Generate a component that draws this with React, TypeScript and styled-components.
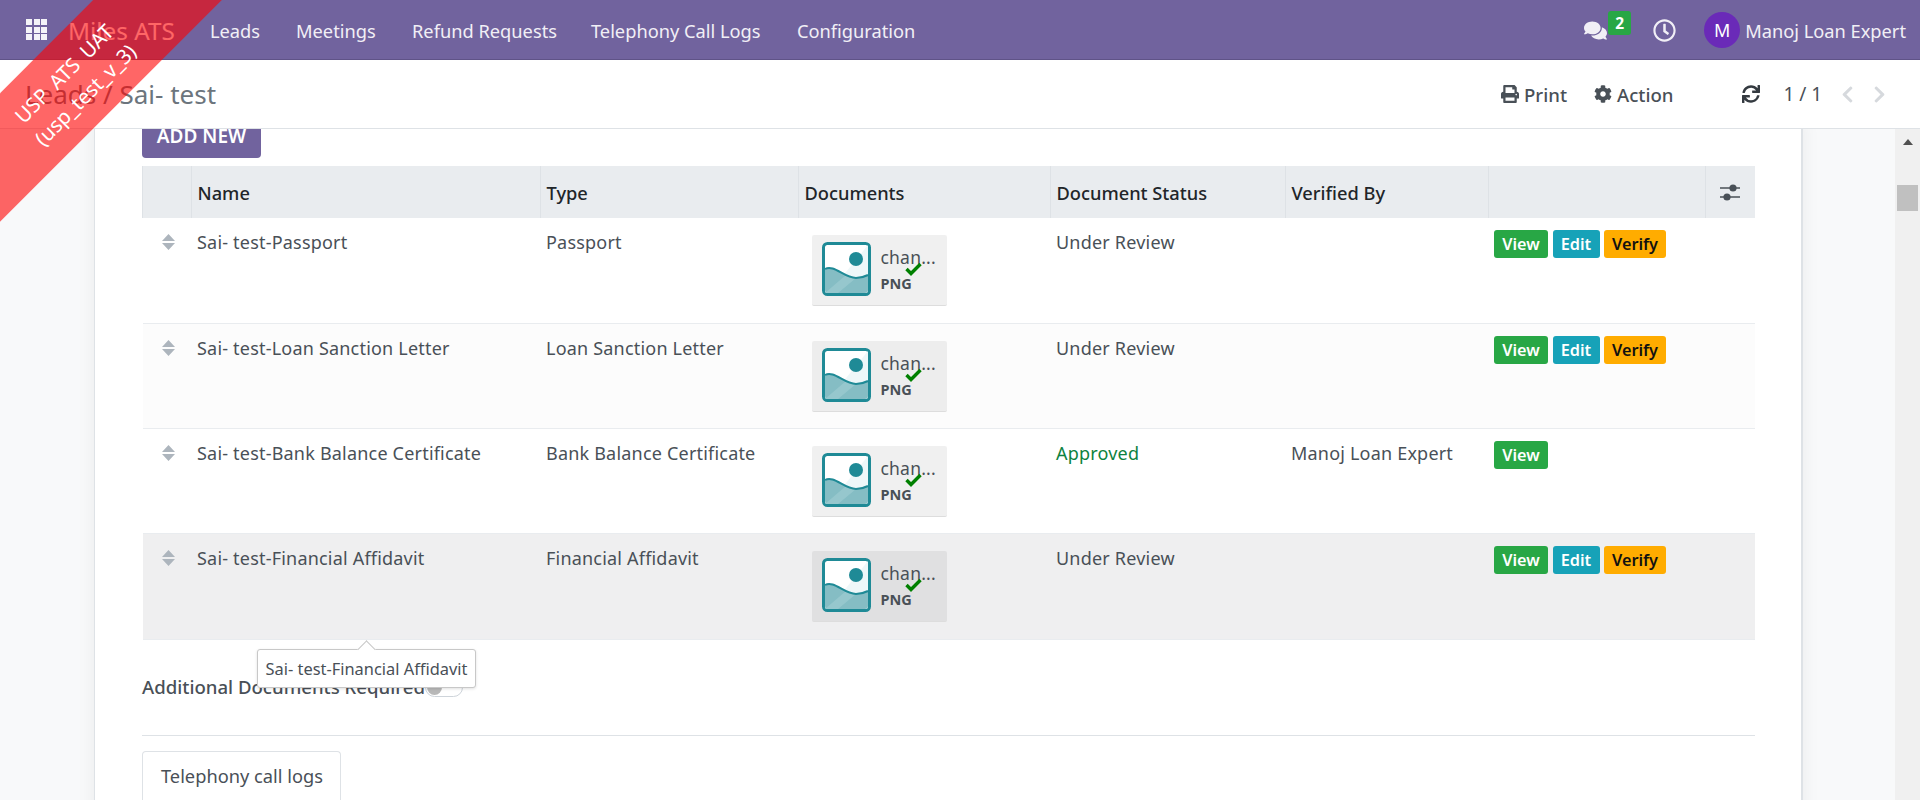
import React from 'react';
import styled, { createGlobalStyle } from 'styled-components';
import { FaCog, FaPrint, FaSync, FaComments, FaRegClock, FaChevronLeft, FaChevronRight } from 'react-icons/fa';

const Global = createGlobalStyle`
  html, body { margin: 0; padding: 0; height: 100%; overflow: hidden; }
  body { font-family: "Noto Sans", "Open Sans", sans-serif; font-size: 18px; color: #495057; background: #fff; }
  #root { height: 100%; }
`;

const Page = styled.div`
  height: 800px; display: flex; flex-direction: column; overflow: hidden; position: relative;
`;
const Navbar = styled.header`
  height: 58px; padding-top: 1px; flex: none; background: #71639e; border-bottom: 1px solid #5f5387;
  display: flex; align-items: center; color: #f1eff6; font-size: 18.25px;
`;
const AppsButton = styled.span`
  width: 21px; height: 21px; margin-left: 26px; margin-top: -1px; display: grid; grid-template-columns: repeat(3, 6px); grid-auto-rows: 6px; gap: 1.5px;
  & > i { background: #f4f3f8; display: block; }
`;
const Brand = styled.span`
  margin-left: 21px; font-size: 24.3px; color: #fff; width: 142px; flex: none; white-space: nowrap;
`;
const NavItem = styled.span<{ $w: number }>`
  width: ${p => p.$w}px; flex: none; white-space: nowrap;
`;
const NavRight = styled.div`
  margin-left: auto; display: flex; align-items: center; padding-right: 14px;
`;
const ChatWrap = styled.span`
  position: relative; width: 47px; height: 26px; display: flex; align-items: center; color: #f1eff6; font-size: 23px; margin-right: 22px;
`;
const Badge = styled.span`
  position: absolute; left: 24px; top: -6px; width: 23px; height: 24px; border-radius: 3px; background: #28a745; color: #fff;
  font-size: 15.5px; font-weight: 700; display: flex; align-items: center; justify-content: center;
`;
const ClockIcon = styled.span`
  color: #f1eff6; font-size: 23px; display: flex; margin-right: 28px;
`;
const Avatar = styled.span`
  width: 36px; height: 36px; border-radius: 50%; background: #6a2ab8; color: #fff; display: flex; align-items: center; justify-content: center;
  font-size: 18px; margin-right: 5px;
`;
const ControlPanel = styled.div`
  height: 69px; flex: none; background: #fff; border-bottom: 1px solid #dee2e6; box-sizing: border-box;
  display: flex; align-items: center; padding-left: 25px; padding-right: 31.5px;
`;
const Breadcrumb = styled.div`
  font-size: 26px; color: #6c757d; flex: 1;
`;
const ActionBtn = styled.span<{ $gap?: number }>`
  display: flex; align-items: center; gap: 5px; font-size: 18.6px; color: #495057; font-weight: 500; margin-right: ${p => p.$gap || 0}px;
  & svg { font-size: 18px; }
`;
const Refresh = styled.span`
  display: flex; font-size: 18px; color: #343a40; margin-left: 68px;
`;
const Pager = styled.span`
  font-size: 19px; color: #495057; margin-left: 24px; width: 41px; white-space: nowrap;
`;
const Chevron = styled.span`
  display: flex; font-size: 19px; color: #d6d9dd; margin-left: 13px;
`;
const Body = styled.div`
  flex: 1; display: flex; min-height: 0; background: #f8f9fa;
`;
const Scroller = styled.main`
  flex: 1; overflow: hidden; display: flex; padding-left: 94px; padding-right: 93px;
`;
const Sheet = styled.section`
  flex: 1; background: #fff; border: solid #dee2e6; border-width: 0 2px 0 1px; box-shadow: 0 0 18px rgba(0,0,0,.06);
  padding: 0 46px 0 47px; margin-top: -10px; min-height: 900px; box-sizing: border-box;
`;
const AddNew = styled.button`
  display: block; width: 119px; height: 39px; background: #71639e; color: #fff; border: 0; border-radius: 0 0 4px 4px; font: 600 19px "Noto Sans", sans-serif;
  padding: 0 0 5px; margin-bottom: 8px;
`;
const Table = styled.table`
  width: 100%; border-collapse: collapse; table-layout: fixed;
`;
const Th = styled.th`
  height: 52px; background: #e9ecef; color: #212529; font-weight: 500; text-align: left; padding: 0 5.5px; font-size: 18.25px;
  border-left: 1px solid #dee2e6; box-sizing: border-box;
`;
const Row = styled.tr<{ $bg?: string }>`
  background: ${p => p.$bg || '#fff'};
`;
const Td = styled.td<{ $ok?: boolean }>`
  height: 105.25px; box-sizing: border-box; vertical-align: top; padding: 12px 5.5px 0; border-bottom: 1px solid #e9ecef;
  font-size: 18px; letter-spacing: .2px; line-height: 24px; white-space: nowrap; color: ${p => (p.$ok ? '#0d8240' : '#495057')};
`;
const HandleCell = styled(Td)`
  padding: 16px 0 0 19px;
  & svg { display: block; }
`;
const DocCell = styled(Td)`
  padding: 17px 0 0 13px;
`;
const Card = styled.div`
  position: relative; width: 135px; height: 71px; background: rgba(0,0,0,.058); border-bottom: 1px solid #ddd; border-radius: 2px; box-sizing: border-box;
  display: flex; padding: 7px 0 0 10px; gap: 10px;
`;
const CardText = styled.div`
  display: flex; flex-direction: column; padding-top: 3px;
`;
const CardName = styled.span`
  font-size: 17.5px; line-height: 24px;
`;
const CardExt = styled.span`
  font-size: 14.5px; font-weight: 700; line-height: 18px; margin-top: 5px; letter-spacing: 0;
`;
const Tick = styled.svg`
  position: absolute; left: 93px; top: 27px; width: 17px; height: 14px;
`;
const Buttons = styled.div`
  display: flex; gap: 4.5px;
`;
const Btn = styled.span<{ $bg: string; $fg: string; $w: number }>`
  width: ${p => p.$w}px; height: 28px; border-radius: 3px; background: ${p => p.$bg}; color: ${p => p.$fg}; font-size: 16.25px; font-weight: 600; letter-spacing: 0;
  display: flex; align-items: center; justify-content: center; line-height: 1;
`;
const ToggleRow = styled.div`
  display: flex; align-items: center; margin-top: 35px; height: 24px; font-weight: 500; font-size: 18.6px; color: #495057;
`;
const Toggle = styled.span`
  width: 38px; height: 19px; border: 1px solid #ced4da; border-radius: 10px; box-sizing: border-box; margin-top: 2px; display: flex; align-items: center; padding-left: 1px;
  & > i { width: 15px; height: 15px; border-radius: 50%; background: #b8b8b8; display: block; }
`;
const Separator = styled.hr`
  border: 0; border-top: 1px solid #dee2e6; margin: 36px 0 15px;
`;
const Tab = styled.div`
  width: 199px; height: 50px; border: 1px solid #dee2e6; border-bottom: 0; border-radius: 4px 4px 0 0; box-sizing: border-box;
  padding: 12px 0 0 18px; font-size: 18.25px; line-height: 24px;
`;
const Tooltip = styled.div`
  position: absolute; left: 257px; top: 649px; width: 219px; height: 39px; background: #fff; border: 1px solid #c8c8c8; border-radius: 3px;
  box-sizing: border-box; box-shadow: 0 1px 3px rgba(0,0,0,.12); font-size: 16.4px; color: #495057; display: flex; align-items: center; justify-content: center; white-space: nowrap;
  &::before {
    content: ''; position: absolute; left: 102px; top: -7px; width: 12px; height: 12px; background: #fff;
    border: solid #c8c8c8; border-width: 1px 0 0 1px; transform: rotate(45deg);
  }
`;
const ScrollTrack = styled.aside`
  width: 25px; flex: none; background: #f0f0f0; display: flex; flex-direction: column; align-items: center; padding-top: 10px; box-sizing: border-box;
`;
const ScrollUp = styled.span`
  width: 0; height: 0; border: solid transparent; border-width: 0 5.5px 6px; border-bottom-color: #505050;
`;
const ScrollThumb = styled.span`
  width: 21px; height: 26px; background: #c0c0c0; margin-top: 40px;
`;
const Ribbon = styled.div`
  position: absolute; left: -126px; top: 38px; width: 400px; height: 91px; background: rgba(255,0,0,.6); transform: rotate(-45deg);
  color: #fff; font-size: 20.5px; line-height: 30px; text-align: center; display: flex; flex-direction: column; justify-content: center;
  pointer-events: none; white-space: nowrap; word-spacing: 4px;
`;
const SlidersIcon = styled.svg`
  display: block; margin-left: 8.5px;
`;

const cols = [49, 349, 258, 252, 235, 203, 217, 49];
const btn = {
  view: { $bg: '#28a745', $fg: '#fff', $w: 54, label: 'View' },
  edit: { $bg: '#17a2b8', $fg: '#fff', $w: 47, label: 'Edit' },
  verify: { $bg: '#ffac00', $fg: '#111', $w: 62, label: 'Verify' },
};

const rows = [
  { name: 'Passport', status: 'Under Review', by: '', acts: ['view', 'edit', 'verify'], bg: '#fff' },
  { name: 'Loan Sanction Letter', status: 'Under Review', by: '', acts: ['view', 'edit', 'verify'], bg: '#fcfcfc' },
  { name: 'Bank Balance Certificate', status: 'Approved', by: 'Manoj Loan Expert', acts: ['view'], bg: '#fff' },
  { name: 'Financial Affidavit', status: 'Under Review', by: '', acts: ['view', 'edit', 'verify'], bg: '#efeff0' },
] as const;

const ImageIcon = () => (
  <svg width="49" height="54" viewBox="0 0 49 54">
    <rect x="1.5" y="1.5" width="46" height="51" rx="4" fill="#fff" stroke="#1f8a96" strokeWidth="3" />
    <path d="M46 3 V33 C44 34 40 36 34 36 C30 36 26 34.500 22 32.500 Z" fill="#eef7f9" />
    <path d="M3 27 C12 22 22 36 34 36 C40 36 44 34 46 33 V48 a3 3 0 0 1-3 3 H6 a3 3 0 0 1-3-3 Z" fill="#85bdc4" stroke="none" />
    <path d="M3 51 L24 33 C28 35 31 36 34 36 L16 51 Z" fill="#96c7cd" />
    <path d="M3 27 C12 22 22 36 34 36 C40 36 44 34 46 33" fill="none" stroke="#1f8a96" strokeWidth="2" />
    <circle cx="34" cy="17" r="7" fill="#1f8a96" />
  </svg>
);

const SortHandle = () => (
  <svg width="13" height="16" viewBox="0 0 13 16">
    <path d="M6.5 0 L13 7 H0 Z M0 9 H13 L6.500 16 Z" fill="#adb5bd" />
  </svg>
);

const Sliders = () => (
  <SlidersIcon width="20" height="17" viewBox="0 0 20 17">
    <path d="M0 4h20M0 13h20" stroke="#495057" strokeWidth="1.7" />
    <circle cx="13" cy="4" r="3.6" fill="#495057" />
    <circle cx="7" cy="13" r="3.6" fill="#495057" />
  </SlidersIcon>
);

export default function App() {
  return (
    <Page>
      <Global />
      <Navbar>
        <AppsButton>{Array.from({ length: 9 }).map((_, i) => <i key={i} />)}</AppsButton>
        <Brand>Miles ATS</Brand>
        <NavItem $w={86}>Leads</NavItem>
        <NavItem $w={116}>Meetings</NavItem>
        <NavItem $w={179}>Refund Requests</NavItem>
        <NavItem $w={206}>Telephony Call Logs</NavItem>
        <NavItem $w={130}>Configuration</NavItem>
        <NavRight>
          <ChatWrap><FaComments /><Badge>2</Badge></ChatWrap>
          <ClockIcon><FaRegClock /></ClockIcon>
          <Avatar>M</Avatar>
          <span>Manoj Loan Expert</span>
        </NavRight>
      </Navbar>
      <ControlPanel>
        <Breadcrumb>Leads / Sai- test</Breadcrumb>
        <ActionBtn $gap={27}><FaPrint />Print</ActionBtn>
        <ActionBtn><FaCog />Action</ActionBtn>
        <Refresh><FaSync /></Refresh>
        <Pager>1 / 1</Pager>
        <Chevron><FaChevronLeft /></Chevron>
        <Chevron><FaChevronRight /></Chevron>
      </ControlPanel>
      <Body>
        <Scroller>
          <Sheet>
            <AddNew>ADD NEW</AddNew>
            <Table>
              <colgroup>{cols.map((w, i) => <col key={i} width={w} />)}</colgroup>
              <thead>
                <tr>
                  <Th />
                  <Th>Name</Th>
                  <Th>Type</Th>
                  <Th>Documents</Th>
                  <Th>Document Status</Th>
                  <Th>Verified By</Th>
                  <Th />
                  <Th><Sliders /></Th>
                </tr>
              </thead>
              <tbody>
                {rows.map(r => (
                  <Row key={r.name} $bg={r.bg}>
                    <HandleCell><SortHandle /></HandleCell>
                    <Td>Sai- test-{r.name}</Td>
                    <Td>{r.name}</Td>
                    <DocCell>
                      <Card>
                        <ImageIcon />
                        <CardText>
                          <CardName>chan...</CardName>
                          <CardExt>PNG</CardExt>
                        </CardText>
                        <Tick viewBox="0 0 17 14"><path d="M1.5 7 L6 11.5 L15.5 2" fill="none" stroke="#008000" strokeWidth="3.4" /></Tick>
                      </Card>
                    </DocCell>
                    <Td $ok={r.status === 'Approved'}>{r.status}</Td>
                    <Td>{r.by}</Td>
                    <Td>
                      <Buttons>
                        {r.acts.map(a => {
                          const { label, ...rest } = btn[a];
                          return <Btn key={a} {...rest}>{label}</Btn>;
                        })}
                      </Buttons>
                    </Td>
                    <Td />
                  </Row>
                ))}
              </tbody>
            </Table>
            <ToggleRow>Additional Documents Required<Toggle><i /></Toggle></ToggleRow>
            <Separator />
            <Tab>Telephony call logs</Tab>
          </Sheet>
        </Scroller>
        <ScrollTrack><ScrollUp /><ScrollThumb /></ScrollTrack>
      </Body>
      <Tooltip>Sai- test-Financial Affidavit</Tooltip>
      <Ribbon><span>USP ATS UAT</span><span>(usp_test_v_3)</span></Ribbon>
    </Page>
  );
}
